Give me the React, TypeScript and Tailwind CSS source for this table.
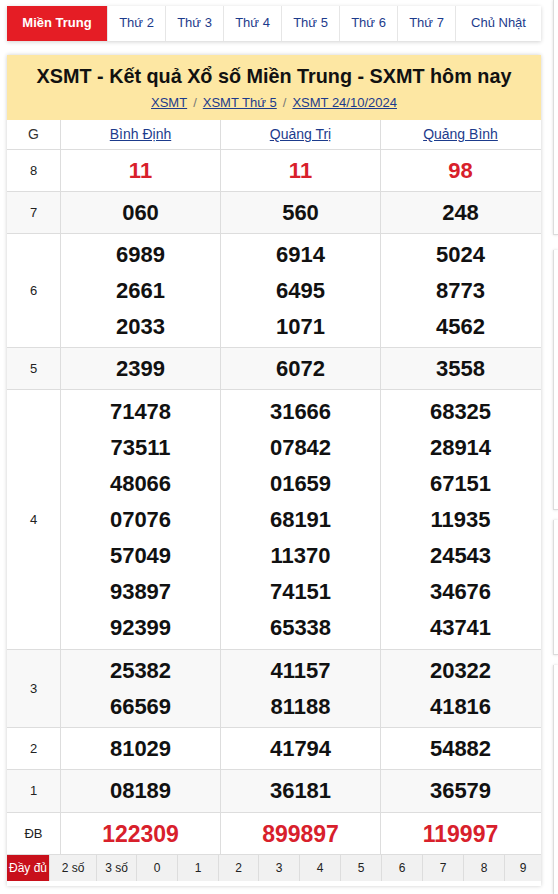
import React from "react";

const tabs = ["Thứ 2", "Thứ 3", "Thứ 4", "Thứ 5", "Thứ 6", "Thứ 7"];

type Row = { label: string; h: string; red?: boolean; big?: boolean; vals: string[][] };

const rows: Row[] = [
  { label: "8", h: "h-[42px]", red: true, vals: [["11"], ["11"], ["98"]] },
  { label: "7", h: "h-[42px]", vals: [["060"], ["560"], ["248"]] },
  {
    label: "6",
    h: "h-[114px]",
    vals: [
      ["6989", "2661", "2033"],
      ["6914", "6495", "1071"],
      ["5024", "8773", "4562"],
    ],
  },
  { label: "5", h: "h-[42px]", vals: [["2399"], ["6072"], ["3558"]] },
  {
    label: "4",
    h: "h-[260px]",
    vals: [
      ["71478", "73511", "48066", "07076", "57049", "93897", "92399"],
      ["31666", "07842", "01659", "68191", "11370", "74151", "65338"],
      ["68325", "28914", "67151", "11935", "24543", "34676", "43741"],
    ],
  },
  {
    label: "3",
    h: "h-[78px]",
    vals: [
      ["25382", "66569"],
      ["41157", "81188"],
      ["20322", "41816"],
    ],
  },
  { label: "2", h: "h-[42px]", vals: [["81029"], ["41794"], ["54882"]] },
  { label: "1", h: "h-[43px]", vals: [["08189"], ["36181"], ["36579"]] },
  { label: "ĐB", h: "h-[42px]", red: true, big: true, vals: [["122309"], ["899897"], ["119997"]] },
];

const bottom = [
  { t: "2 số", w: "w-[47px]" },
  { t: "3 số", w: "w-[40px]" },
  { t: "0", w: "w-[41px]" },
  { t: "1", w: "w-[41px]" },
  { t: "2", w: "w-[40px]" },
  { t: "3", w: "w-[41px]" },
  { t: "4", w: "w-[41px]" },
  { t: "5", w: "w-[41px]" },
  { t: "6", w: "w-[41px]" },
  { t: "7", w: "w-[41px]" },
  { t: "8", w: "w-[41px]" },
  { t: "9", w: "flex-1" },
];

export default function App() {
  return (
    <div className="w-[558px] h-[894px] overflow-hidden bg-white flex font-['Liberation_Sans',Arial,sans-serif]">
      <div className="w-[534px] ml-[7px] shrink-0">
        {/* day tabs */}
        <div className="mt-[6px] h-[35px] flex bg-white shadow-[0_1px_4px_rgba(0,0,0,0.18)]">
          <div className="w-[100px] bg-[#e51d25] text-white text-[13px] font-bold flex items-center justify-center pb-[1px]">
            Miền Trung
          </div>
          {tabs.map((t) => (
            <div
              key={t}
              className="w-[58px] border-l border-[#e6e6e6] text-[#1c3b8c] text-[13px] flex items-center justify-center pb-[1px]"
            >
              {t}
            </div>
          ))}
          <div className="flex-1 border-l border-[#e6e6e6] text-[#1c3b8c] text-[13px] flex items-center justify-center pb-[1px]">
            Chủ Nhật
          </div>
        </div>

        {/* result card */}
        <div className="mt-[14px] bg-white shadow-[0_0_4px_rgba(0,0,0,0.2)]">
          <div className="bg-[#fde7a3] h-[65px] flex flex-col items-center">
            <h1 className="mt-[8px] text-[19.8px] leading-[26px] font-bold text-[#111]">
              XSMT - Kết quả Xổ số Miền Trung - SXMT hôm nay
            </h1>
            <div className="mt-[4px] text-[13px] text-[#1c3b8c] flex gap-[6px]">
              <span className="underline">XSMT</span>
              <span className="text-[#777]">/</span>
              <span className="underline">XSMT Thứ 5</span>
              <span className="text-[#777]">/</span>
              <span className="underline">XSMT 24/10/2024</span>
            </div>
          </div>

          <div className="grid grid-cols-[53px_160px_160px_160px] h-[30px] border-b border-[#ddd] text-[14px]">
            <div className="flex items-center justify-center text-[#333]">G</div>
            {["Bình Định", "Quảng Trị", "Quảng Bình"].map((p) => (
              <div key={p} className="border-l border-[#ddd] flex items-center justify-center text-[#1c3b8c] underline">
                {p}
              </div>
            ))}
          </div>

          {rows.map((r, i) => (
            <div
              key={r.label}
              className={`grid grid-cols-[53px_160px_160px_160px] ${r.h} border-b border-[#ddd] ${i % 2 === 1 ? "bg-[#f8f8f8]" : "bg-white"}`}
            >
              <div className="flex items-center justify-center text-[13px] text-[#222]">{r.label}</div>
              {r.vals.map((col, j) => (
                <div key={j} className="border-l border-[#ddd] flex flex-col items-center justify-center">
                  {col.map((v, k) => (
                    <span
                      key={k}
                      className={`font-bold leading-[36px] ${r.big ? "text-[23px]" : "text-[22px]"} ${r.red ? "text-[#d8202b]" : "text-[#111]"}`}
                    >
                      {v}
                    </span>
                  ))}
                </div>
              ))}
            </div>
          ))}

          <div className="flex h-[26px] bg-[#f1f1f1] text-[12px] text-[#222]">
            <div className="w-[42px] bg-[#c8101b] text-white flex items-center justify-center">Đầy đủ</div>
            {bottom.map((b) => (
              <div key={b.t} className={`${b.w} border-l border-[#ddd] flex items-center justify-center`}>
                {b.t}
              </div>
            ))}
          </div>
          <div className="h-[5px]" />
        </div>
      </div>

      {/* side column, mostly out of view */}
      <div className="ml-[12px] flex-1 flex flex-col">
        <div className="h-[235px] border-l border-b border-[#dcdcdc] shadow-[0_0_3px_rgba(0,0,0,0.15)]" />
        <div className="mt-[15px] h-[260px] border-l border-b border-[#dcdcdc] shadow-[0_0_3px_rgba(0,0,0,0.15)]" />
        <div className="mt-[10px] h-[135px] border-l border-b border-[#dcdcdc] shadow-[0_0_3px_rgba(0,0,0,0.15)]" />
        <div className="mt-[10px] flex-1 border-l border-[#dcdcdc] shadow-[0_0_3px_rgba(0,0,0,0.15)]" />
      </div>
    </div>
  );
}
